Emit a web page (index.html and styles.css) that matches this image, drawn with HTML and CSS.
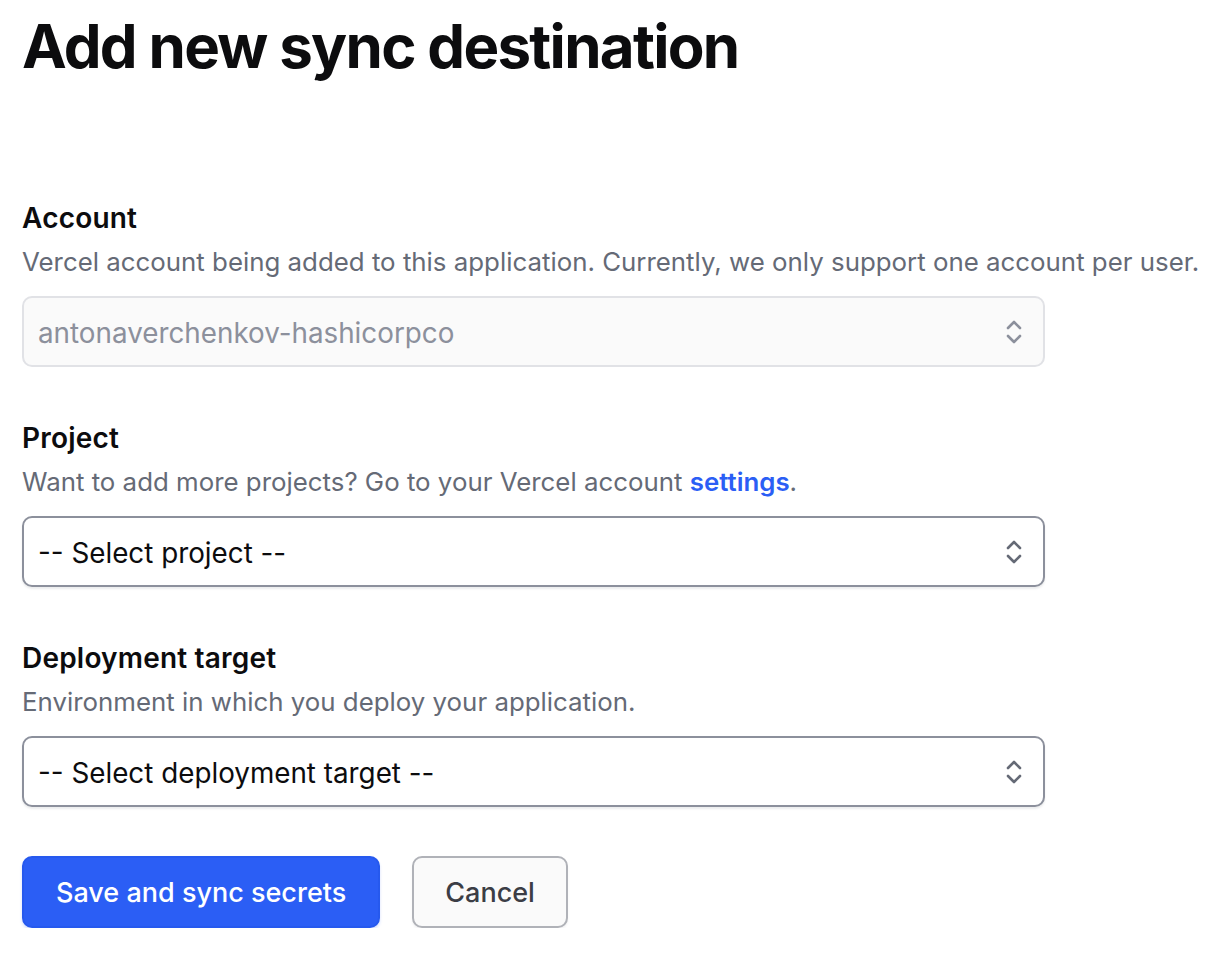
FILE: index.html
```html
<!DOCTYPE html>
<html lang="en">
<head>
<meta charset="utf-8">
<title>Add new sync destination</title>
<link rel="stylesheet" href="styles.css">
</head>
<body>
<main class="page">
  <h1 class="title">Add new sync destination</h1>
  <form class="form">
    <div class="field">
      <label class="label" for="account">Account</label>
      <p class="helper">Vercel account being added to this application. Currently, we only support one account per user.</p>
      <div class="select-wrap is-disabled">
        <select id="account" class="select" disabled>
          <option>antonaverchenkov-hashicorpco</option>
        </select>
        <svg class="chevron" viewBox="0 0 16 26" width="16" height="26" aria-hidden="true"><path d="M2 9 L8 3 L14 9 M2 17 L8 23 L14 17" fill="none" stroke="currentColor" stroke-width="2.6" stroke-linecap="round" stroke-linejoin="round"/></svg>
      </div>
    </div>
    <div class="field">
      <label class="label" for="project">Project</label>
      <p class="helper">Want to add more projects? Go to your Vercel account <a class="link" href="#">settings</a>.</p>
      <div class="select-wrap">
        <select id="project" class="select">
          <option>-- Select project --</option>
        </select>
        <svg class="chevron" viewBox="0 0 16 26" width="16" height="26" aria-hidden="true"><path d="M2 9 L8 3 L14 9 M2 17 L8 23 L14 17" fill="none" stroke="currentColor" stroke-width="2.6" stroke-linecap="round" stroke-linejoin="round"/></svg>
      </div>
    </div>
    <div class="field">
      <label class="label" for="target">Deployment target</label>
      <p class="helper">Environment in which you deploy your application.</p>
      <div class="select-wrap">
        <select id="target" class="select">
          <option>-- Select deployment target --</option>
        </select>
        <svg class="chevron" viewBox="0 0 16 26" width="16" height="26" aria-hidden="true"><path d="M2 9 L8 3 L14 9 M2 17 L8 23 L14 17" fill="none" stroke="currentColor" stroke-width="2.6" stroke-linecap="round" stroke-linejoin="round"/></svg>
      </div>
    </div>
    <div class="actions">
      <button type="button" class="btn btn-primary">Save and sync secrets</button>
      <button type="button" class="btn btn-secondary">Cancel</button>
    </div>
  </form>
</main>
</body>
</html>
```

FILE: styles.css
```css
* { box-sizing: border-box; }

html, body {
  margin: 0;
  padding: 0;
  background: #ffffff;
}

body {
  font-family: Inter, "Liberation Sans", Arial, sans-serif;
  color: #0c0c0e;
}

.page {
  padding: 10px 0 0 22px;
  width: 1216px;
}

.title {
  margin: 0;
  font-size: 60px;
  line-height: 72px;
  font-weight: 700;
  letter-spacing: -1.7px;
  color: #0c0c0e;
}

.form {
  margin-top: 118px;
  display: flex;
  flex-direction: column;
  gap: 53px;
  width: 1023px;
}

.field {
  display: flex;
  flex-direction: column;
}

.label {
  font-size: 28px;
  line-height: 36px;
  font-weight: 600;
  letter-spacing: 0.2px;
  color: #0c0c0e;
}

.helper {
  margin: 8px 0 16px;
  font-size: 25.85px;
  line-height: 36px;
  color: #656a76;
  white-space: nowrap;
}

.link {
  color: #2b5ef5;
  font-weight: 600;
  text-decoration: none;
}

.select-wrap {
  position: relative;
  width: 1023px;
  color: #656a76;
}

.select {
  display: block;
  width: 100%;
  height: 71px;
  margin: 0;
  padding: 3px 60px 0 14px;
  appearance: none;
  -webkit-appearance: none;
  font-family: Inter, "Liberation Sans", Arial, sans-serif;
  font-size: 27.8px;
  color: #0c0c0e;
  background: #ffffff;
  border: 2px solid #8c909c;
  border-radius: 10px;
  box-shadow: 0 2px 2px rgba(101, 106, 118, 0.12);
  outline: none;
}

.is-disabled .select {
  background: #fafafa;
  border-color: #e1e2e6;
  color: #8c909c;
  box-shadow: none;
  opacity: 1;
}

.is-disabled {
  color: #8c909c;
}

.chevron {
  position: absolute;
  right: 23px;
  top: 50%;
  margin-top: -13px;
  pointer-events: none;
}

.actions {
  display: flex;
  gap: 32px;
  margin-top: -4px;
}

.btn {
  height: 72px;
  padding: 0 32px;
  font-family: Inter, "Liberation Sans", Arial, sans-serif;
  font-size: 27px;
  font-weight: 500;
  border-radius: 10px;
  cursor: pointer;
}

.btn-primary {
  background: #2b5ef5;
  color: #ffffff;
  border: 2px solid #2659ee;
  box-shadow: 0 2px 3px rgba(43, 94, 245, 0.2);
}

.btn-secondary {
  padding: 0 31px;
  background: #fafafa;
  color: #3b3d45;
  border: 2px solid #b0b2b8;
  box-shadow: 0 2px 2px rgba(101, 106, 118, 0.08);
}
```
